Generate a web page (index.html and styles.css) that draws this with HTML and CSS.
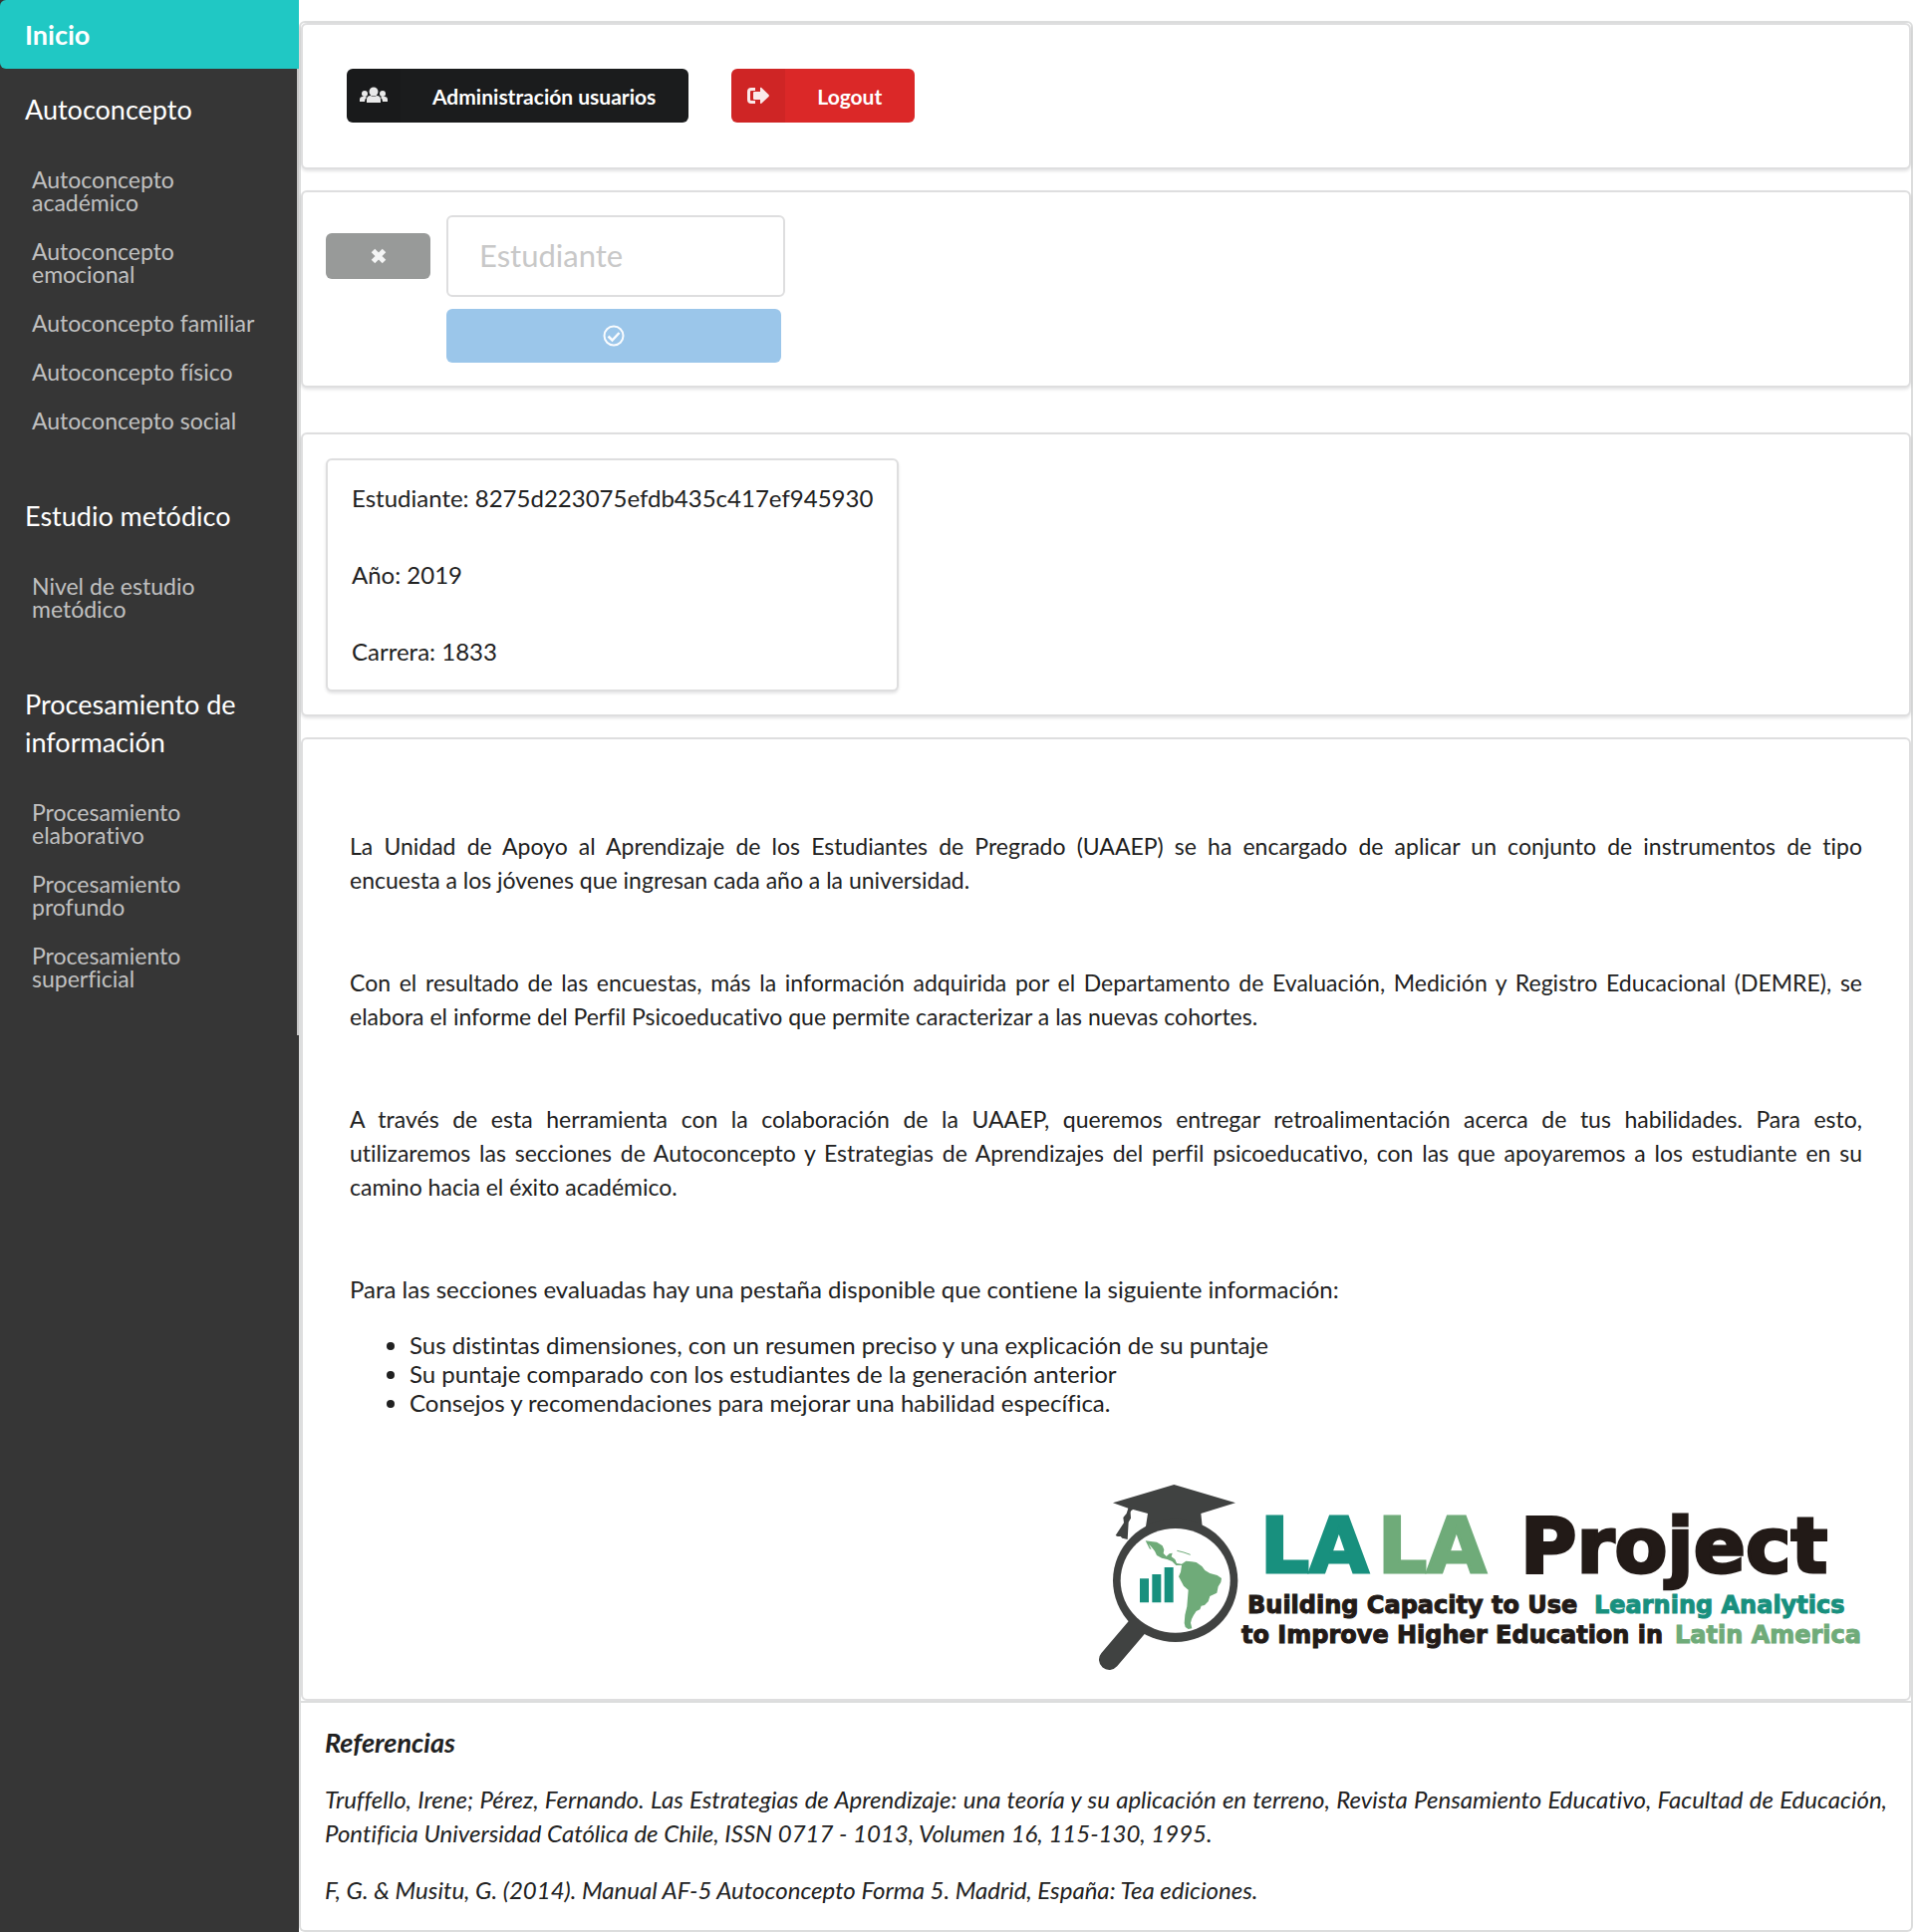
FILE: index.html
```html
<!DOCTYPE html>
<html lang="es">
<head>
<meta charset="utf-8">
<title>Perfil Psicoeducativo</title>
<link rel="stylesheet" href="styles.css">
</head>
<body>
<aside class="sidebar">
  <nav class="menu" aria-label="Secciones">
    <a class="menu-home" href="#">Inicio</a>
    <section class="menu-group">
      <h2>Autoconcepto</h2>
      <a href="#">Autoconcepto académico</a>
      <a href="#">Autoconcepto emocional</a>
      <a href="#">Autoconcepto familiar</a>
      <a href="#">Autoconcepto físico</a>
      <a href="#">Autoconcepto social</a>
    </section>
    <section class="menu-group">
      <h2>Estudio metódico</h2>
      <a href="#">Nivel de estudio metódico</a>
    </section>
    <section class="menu-group">
      <h2>Procesamiento de información</h2>
      <a href="#">Procesamiento elaborativo</a>
      <a href="#">Procesamiento profundo</a>
      <a href="#">Procesamiento superficial</a>
    </section>
  </nav>
</aside>
<main class="page">
  <div class="container">
    <section class="segment actions">
      <button class="btn labeled black" type="button">
        <span class="btn-icon"><svg width="28" height="18" viewBox="0 0 28 18" aria-hidden="true"><circle cx="5" cy="7" r="3"/><circle cx="23" cy="7" r="3"/><path d="M0 15v-2q0-3 3-3h3l1 1q-2 1-2 4zM28 15v-2q0-3-3-3h-3l-1 1q2 1 2 4z"/><circle cx="14" cy="5" r="4.500"/><path d="M7 16v-3q0-4 4-4 3 2 6 0 4 0 4 4v3z"/></svg></span>
        <span class="btn-text">Administración usuarios</span>
      </button>
      <button class="btn labeled red" type="button">
        <span class="btn-icon"><svg width="22" height="18" viewBox="0 0 22 18" aria-hidden="true"><path d="M8 1v3H4q-1 0-1 1v8q0 1 1 1h4v3H4q-4 0-4-4V5q0-4 4-4z"/><path d="M13 1.500q0-1 1-.7l7.500 7.200q.8 1 0 2L14 17q-1 .4-1-.7V13H7q-1 0-1-1V6q0-1 1-1h6z"/></svg></span>
        <span class="btn-text">Logout</span>
      </button>
    </section>
    <section class="segment search">
      <button class="btn clear" type="button" aria-label="Limpiar"><svg width="16" height="16" viewBox="0 0 16 16" aria-hidden="true"><path d="M2.500 2.500l11 11M13.500 2.500l-11 11" stroke="#f4f5f5" stroke-width="5"/></svg></button>
      <form class="search-form">
        <input type="text" placeholder="Estudiante" aria-label="Estudiante">
        <button class="btn confirm" type="button" aria-label="Confirmar"><svg width="22" height="22" viewBox="0 0 22 22" fill="none" stroke="#fafcfe" aria-hidden="true"><circle cx="11" cy="11" r="9.500" stroke-width="2"/><path d="M5.500 11.500l4 4 7-7.500" stroke-width="2.500"/></svg></button>
      </form>
    </section>
    <section class="segment student">
      <div class="student-card">
        <p>Estudiante: 8275d223075efdb435c417ef945930</p>
        <p>Año: 2019</p>
        <p>Carrera: 1833</p>
      </div>
    </section>
    <section class="segment intro">
      <div class="prose">
        <p><span class="full-line">La Unidad de Apoyo al Aprendizaje de los Estudiantes de Pregrado (UAAEP) se ha encargado de aplicar un conjunto de instrumentos de tipo</span> encuesta a los jóvenes que ingresan cada año a la universidad.</p>
        <p>Con el resultado de las encuestas, más la información adquirida por el Departamento de Evaluación, Medición y Registro Educacional (DEMRE), se elabora el informe del Perfil Psicoeducativo que permite caracterizar a las nuevas cohortes.</p>
        <p><span class="full-line">A través de esta herramienta con la colaboración de la UAAEP, queremos entregar retroalimentación acerca de tus habilidades. Para esto,</span> utilizaremos las secciones de Autoconcepto y Estrategias de Aprendizajes del perfil psicoeducativo, con las que apoyaremos a los estudiante en su camino hacia el éxito académico.</p>
      </div>
      <p>Para las secciones evaluadas hay una pestaña disponible que contiene la siguiente información:</p>
      <ul>
        <li>Sus distintas dimensiones, con un resumen preciso y una explicación de su puntaje</li>
        <li>Su puntaje comparado con los estudiantes de la generación anterior</li>
        <li>Consejos y recomendaciones para mejorar una habilidad específica.</li>
      </ul>
      <svg class="logo" width="766" height="188" viewBox="0 0 766 188" role="img" aria-label="LALA Project">
        <g transform="translate(-14 -20) scale(.33333)">
          <path fill="#404241" d="M268 63L453 118 349 150 353 189Q268 230 183 189L189 150 145 138Q136 140 137 150L138 164 131 176 128 228 119 226 112 224 107 219 98 219 92 216 117 178 115 162 125 150 130 134 84 118Z"/>
          <path fill="none" stroke="#404241" stroke-width="62" stroke-linecap="round" d="M73 590L160 488"/>
          <ellipse cx="272" cy="352" rx="188" ry="185" fill="#404241"/>
          <ellipse cx="272" cy="352" rx="165" ry="157" fill="#fff"/>
          <path fill="#18907e" d="M165 346h27v72h-27zM202 333h27v85h-27zM239 312h27v106h-27z"/>
          <path fill="#6fab79" d="M182 232L198 234 216 236 233 247 238 259 236 270 245 279 254 271 263 269 260 280 271 288 276 300 291 302 304 293 321 295 335 297 352 309 361 321 376 330 398 336 411 345 409 357 401 370 397 389 376 399 371 415 360 426 350 428 346 439 335 444 327 456 321 468 318 479 322 496 311 498 302 492 299 480 301 455 307 430 311 380 297 368 282 340 288 326 291 306 274 306 262 294 247 288 231 284 216 276 210 263 201 252 192 242 200 259 194 256Z"/>
          <path fill="none" stroke="#6fab79" stroke-width="3" d="M277 262L297 267 317 274"/>
        </g>
        <g class="logo-title">
          <text x="162" y="89" class="teal">LA</text>
          <text x="280" y="89" class="green">LA</text>
          <text x="423" y="89">Project</text>
        </g>
        <g class="logo-tagline">
          <text x="149" y="130">Building Capacity to Use</text>
          <text x="497" y="130" class="teal">Learning Analytics</text>
          <text x="143" y="160">to Improve Higher Education in</text>
          <text x="578" y="160" class="green">Latin America</text>
        </g>
      </svg>
    </section>
  </div>
  <footer class="references">
    <h3>Referencias</h3>
    <p>Truffello, Irene; Pérez, Fernando. Las Estrategias de Aprendizaje: una teoría y su aplicación en terreno, Revista Pensamiento Educativo, Facultad de Educación, Pontificia Universidad Católica de Chile, ISSN 0717 - 1013, Volumen 16, 115-130, 1995.</p>
    <p>F, G. &amp; Musitu, G. (2014). Manual AF-5 Autoconcepto Forma 5. Madrid, España: Tea ediciones.</p>
  </footer>
</main>
</body>
</html>
```
FILE: styles.css
```css
* { box-sizing: border-box; }

body {
  margin: 0;
  display: flex;
  min-height: 100vh;
  background: #fff;
  color: #212121;
  font: 24px/34px Lato, "Liberation Sans", sans-serif;
  font-variant-ligatures: no-common-ligatures;
}

h2, h3, p, ul { margin: 0; }

/* Sidebar */
.sidebar {
  flex: 0 0 300px;
  background: #363636;
}

.menu {
  padding-bottom: 2px;
  border-right: 2px solid #c8c8c8;
}

.menu a {
  display: block;
  color: #c0c0c0;
  font-size: 23px;
  line-height: 23px;
  padding: 13px 32px;
  text-decoration: none;
}

.menu .menu-home {
  margin-right: -2px;
  padding: 16px 25px 15px;
  border-radius: 6px 0 0 6px;
  background: #20c8c4;
  color: #fff;
  font-size: 27px;
  font-weight: 700;
  line-height: 38px;
}

.menu-group { padding: 22px 0 30px; }

.menu-group h2 {
  padding: 0 25px;
  margin-bottom: 27px;
  color: #fff;
  font-size: 27px;
  font-weight: 400;
  line-height: 38px;
}

/* Main column */
.page {
  flex: 1;
  min-width: 0;
  padding-top: 21px;
}

.container {
  border: 2px solid #dcdddd;
  border-radius: 6px 6px 0 0;
}

.segment, .student-card {
  border: 2px solid #dededf;
  border-radius: 6px;
  background: #fff;
  box-shadow: 0 2px 3px rgba(34, 36, 38, .12);
}

.segment { margin-bottom: 21px; }

/* Buttons */
.btn {
  display: flex;
  align-items: center;
  justify-content: center;
  padding: 0;
  border: 0;
  border-radius: 6px;
  color: #fff;
  font: 700 21px/24px Lato, "Liberation Sans", sans-serif;
  cursor: pointer;
}

.btn svg { display: block; }

.labeled {
  height: 54px;
  overflow: hidden;
}

.btn-icon {
  display: flex;
  align-items: center;
  justify-content: center;
  width: 54px;
  height: 100%;
  background: rgba(0, 0, 0, .05);
}

.btn-icon svg { fill: #e9e9e9; }
.btn-text { padding: 2px 33px 0 32px; }
.black { background: #1b1c1d; }
.red { background: #db2828; }
.red .btn-icon svg { fill: #fbe9e9; }

.actions {
  display: flex;
  gap: 43px;
  padding: 44px 44px 45px;
}

/* Student search */
.search {
  display: flex;
  align-items: flex-start;
  gap: 16px;
  padding: 23px;
  margin-bottom: 45px;
}

.clear {
  width: 105px;
  height: 46px;
  margin-top: 18px;
  background: #989a99;
}

.search-form {
  display: flex;
  flex-direction: column;
  gap: 12px;
}

.search-form input {
  width: 340px;
  height: 82px;
  padding: 0 31px 2px;
  border: 2px solid #dededf;
  border-radius: 6px;
  font: 31px/38px Lato, "Liberation Sans", sans-serif;
}

.search-form input::placeholder { color: #c8c8c8; }

.confirm {
  width: 336px;
  height: 54px;
  background: #9bc6ea;
}

/* Student data */
.student {
  display: flex;
  padding: 24px 23px 23px;
}

.student-card {
  display: grid;
  gap: 43px;
  padding: 21px 24px;
}

/* Introduction */
.intro {
  margin-bottom: 0;
  padding: 90px 47px 28px;
  box-shadow: none;
  text-align: justify;
}

.prose {
  display: grid;
  gap: 69px;
  margin-bottom: 69px;
  font-size: 23px;
}

.full-line {
  display: block;
  text-align-last: justify;
}

.intro ul {
  padding-left: 60px;
  margin: 24px 0 67px;
  line-height: 29px;
}

.logo {
  display: block;
  margin-left: auto;
}

.logo text {
  font-family: "DejaVu Sans", sans-serif;
  font-weight: 700;
  fill: #221a17;
  stroke: #221a17;
}

.logo-title { font-size: 77px; stroke-width: 3px; }
.logo-tagline { font-size: 24px; stroke-width: 1px; }
.logo .teal { fill: #18907e; stroke: #18907e; }
.logo .green { fill: #6fab79; stroke: #6fab79; }

/* References */
.references {
  display: grid;
  gap: 23px;
  padding: 23px 24px;
  border: 2px solid #dcdddd;
  border-top: 0;
  border-radius: 0 0 6px 6px;
  font-style: italic;
  text-align: justify;
}

.references h3 {
  font-size: 27px;
  line-height: 34px;
}
```
